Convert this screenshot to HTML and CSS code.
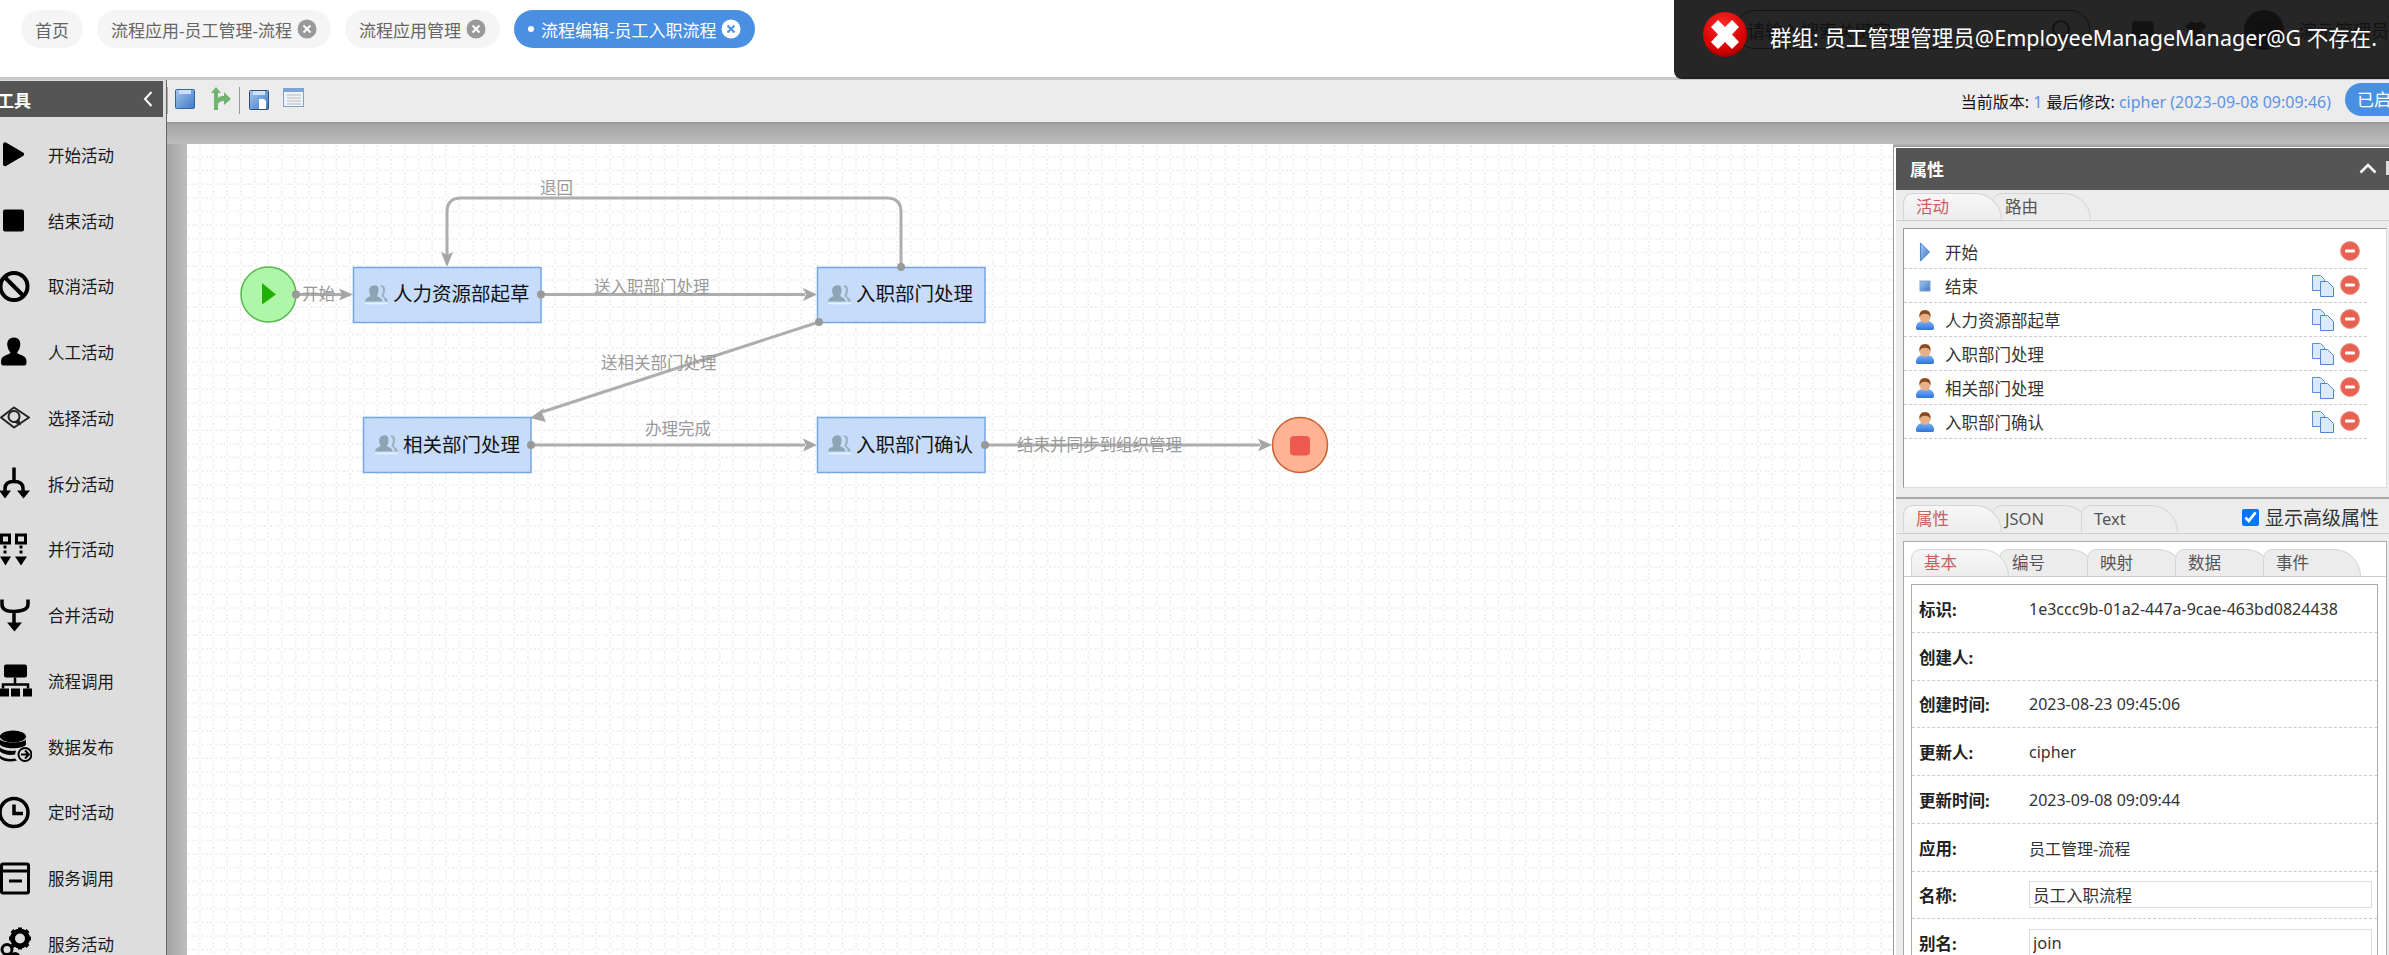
FILE: index.html
```html
<!DOCTYPE html>
<html lang="zh-CN">
<head>
<meta charset="utf-8">
<title>流程编辑-员工入职流程</title>
<link rel="stylesheet" href="styles.css">
</head>
<body>
<svg class="defs" width="0" height="0" aria-hidden="true">
  <defs>
    <linearGradient id="gBlue" x1="0" y1="0" x2="1" y2="1"><stop offset="0" stop-color="#a5c8f0"/><stop offset="1" stop-color="#3f78c4"/></linearGradient>
    <linearGradient id="gBody" x1="0" y1="0" x2="0" y2="1"><stop offset="0" stop-color="#7cb2f5"/><stop offset="1" stop-color="#2f74dc"/></linearGradient>
    <radialGradient id="gErr" cx=".45" cy=".3" r=".75"><stop offset="0" stop-color="#ff2a2a"/><stop offset=".75" stop-color="#d40000"/><stop offset="1" stop-color="#8c0000"/></radialGradient>
    <pattern id="grid" patternUnits="userSpaceOnUse" x="187" y="144" width="13.67" height="13.67">
      <rect x="12" y="1" width="2" height="2" fill="#ececec"/><rect x="12" y="5.560" width="2" height="2" fill="#ececec"/><rect x="12" y="9.120" width="2" height="2" fill="#ececec"/>
      <rect x="1" y="12" width="2" height="2" fill="#ececec"/><rect x="5.560" y="12" width="2" height="2" fill="#ececec"/><rect x="9.120" y="12" width="2" height="2" fill="#ececec"/>
    </pattern>
    <symbol id="i-user" viewBox="0 0 22 22">
      <path d="M1 20c0-5 3-7 6-8h8c3 1 6 3 6 8 0 1-1 2-3 2H4c-2 0-3-1-3-2z" fill="url(#gBody)"/>
      <circle cx="11" cy="8" r="6" fill="#e6b088"/>
      <path d="M5 8c-1-5 2-8 6-8s7 3 6 8c-1-3-3-4-6-4s-5 1-6 4z" fill="#8a4a1e"/>
    </symbol>
    <symbol id="i-copy" viewBox="0 0 22 22">
      <path d="M.5.500h8l4 4v11H.5z" fill="#d9e8fb" stroke="#5d8fd6"/>
      <path d="M8.500 6.500h7l6 6v9h-13z" fill="#dceafc" stroke="#4f85d2"/>
    </symbol>
    <symbol id="i-del" viewBox="0 0 20 20">
      <circle cx="10" cy="10" r="9.500" fill="#e8604f" stroke="#e79a90"/>
      <rect x="5" y="8.500" width="10" height="3" rx="1" fill="#fff"/>
    </symbol>
    <symbol id="i-group" viewBox="0 1 21 19">
      <path d="M9 2c3 0 4 3 3 7l-1 3c3 1 5 3 5 5H0c0-2 2-4 5-5L4 9C3 5 5 2 9 2z" fill="#8ba5b5"/>
      <path d="M15 2c3 0 4 3 3 7l-1 3c2 1 4 3 4 5h-3c0-2-1-4-3-5l1-3c1-3 0-5-2-6 0-1 1-1 1-1z" fill="#9bb2c0"/>
      <rect x="0" y="18" width="21" height="1.400" fill="#e8f1fc"/>
    </symbol>
    <symbol id="i-close" viewBox="0 0 20 20">
      <circle cx="10" cy="10" r="9.500" fill="currentColor"/>
      <path d="M6.500 6.500l7 7M13.500 6.500l-7 7" class="closex"/>
    </symbol>
  </defs>
</svg>

<header class="topbar">
  <nav class="tabs">
    <a class="tab"><span>首页</span></a>
    <a class="tab"><span>流程应用-员工管理-流程</span><svg class="tab-x"><use href="#i-close"/></svg></a>
    <a class="tab"><span>流程应用管理</span><svg class="tab-x"><use href="#i-close"/></svg></a>
    <a class="tab tab-on"><i class="bullet"></i><span>流程编辑-员工入职流程</span><svg class="tab-x"><use href="#i-close"/></svg></a>
  </nav>
  <div class="top-right">
    <div class="search"><span>请输入搜索关键字</span>
      <svg class="search-ico" viewBox="0 0 22 22"><circle cx="10" cy="10" r="8" fill="none" stroke="#333" stroke-width="2"/><path d="M16 16l4 4" stroke="#333" stroke-width="2"/></svg>
    </div>
    <svg class="top-ico" viewBox="0 0 24 24"><rect x="1" y="3" width="22" height="18" rx="3" fill="#333"/></svg>
    <svg class="top-ico" viewBox="0 0 24 24"><path d="M7 3l5 2 5-2 6 5-3 4-2-1v10H6V11l-2 1-3-4z" fill="#333"/></svg>
    <svg class="avatar" viewBox="0 0 40 40"><circle cx="20" cy="20" r="20" fill="#333"/><circle cx="20" cy="18" r="8" fill="#222"/></svg>
    <span class="user">演示管理员</span>
  </div>
</header>

<div class="toast">
  <svg class="toast-ico" viewBox="0 0 44 45"><ellipse cx="22" cy="22.500" rx="22" ry="22.500" fill="url(#gErr)"/><path d="M8 15l7-7 7 7 7-7 7 7-7 7.500 7 7.500-7 7-7-7-7 7-7-7 7-7.500z" fill="#fff"/></svg>
  <span class="toast-text">群组: 员工管理管理员@EmployeeManageManager@G 不存在.</span>
</div>

<main class="main">
  <aside class="side">
    <div class="side-title"><span>工具</span><svg class="side-chev" viewBox="0 0 10 16"><path d="M8.500 1L2 8l6.500 7" fill="none" stroke="#fff" stroke-width="2"/></svg></div>
    <ul class="tools">
      <li class="tool"><svg class="tool-ico" viewBox="0 0 32 32"><path d="M3 6c0-2 2-2.500 3-2l17 10c1.500 1 1.500 2.500 0 3.500L6 27.500c-1 .5-3 0-3-2z"/></svg><span>开始活动</span></li>
      <li class="tool"><svg class="tool-ico" viewBox="0 0 32 32"><rect x="3" y="5" width="21" height="22" rx="2"/></svg><span>结束活动</span></li>
      <li class="tool"><svg class="tool-ico" viewBox="0 0 32 32"><circle cx="14" cy="16" r="13.500" fill="none" stroke="#000" stroke-width="4"/><path d="M4 6l20 20" stroke="#000" stroke-width="4"/></svg><span>取消活动</span></li>
      <li class="tool"><svg class="tool-ico" viewBox="0 0 32 32"><path d="M14 1c5 0 7 4 6 9-.5 3-2 5-3 6 1 2 4 2 7 4 2 1 2.500 3 2.500 6 0 2-1 3-2 3H3c-1 0-2-1-2-3 0-3 .5-5 2.500-6 3-2 6-2 7-4-1-1-2.500-3-3-6-1-5 1-9 6.500-9z"/></svg><span>人工活动</span></li>
      <li class="tool"><svg class="tool-ico" viewBox="0 0 32 32"><path d="M1 16L14 6l15 10-15 10z" fill="none" stroke="#222" stroke-width="2" stroke-linejoin="round"/><circle cx="14" cy="15" r="5.500" fill="none" stroke="#222" stroke-width="2"/><path d="M14 21l7 3-2-7z" fill="#222"/></svg><span>选择活动</span></li>
      <li class="tool"><svg class="tool-ico" viewBox="0 0 32 32"><path d="M14 0v13M5 25v-4c0-5 4-7 9-7s9 2 9 7v4" fill="none" stroke="#000" stroke-width="3.500"/><path d="M-1 23h12l-6 8zM17 23h13l-6.500 8z"/></svg><span>拆分活动</span></li>
      <li class="tool"><svg class="tool-ico" viewBox="0 0 32 32"><path d="M0 0h11v11H0zM3 3v5h5V3zM15 0h12v11H15zM18 3v5h6V3z" fill-rule="evenodd"/><path d="M5 12v3M5 17v3M21 12v3M21 17v3" stroke="#000" stroke-width="3"/><path d="M0 23h11l-5.500 9zM15 23h12l-6 9z"/></svg><span>并行活动</span></li>
      <li class="tool"><svg class="tool-ico" viewBox="0 0 32 32"><path d="M2 0v5c0 5 5 7 12 7s14-2 14-7V0M14 12v12" fill="none" stroke="#000" stroke-width="3.500"/><path d="M7 23h15l-7.500 9z"/></svg><span>合并活动</span></li>
      <li class="tool"><svg class="tool-ico" viewBox="0 0 32 32"><rect x="4" y="0" width="23" height="13" rx="2"/><path d="M15 13v7M3 24v-4h25v4" fill="none" stroke="#000" stroke-width="2.500"/><path d="M0 24h9v8H0zM11 24h9v8h-9zM23 24h9v8h-9z"/></svg><span>流程调用</span></li>
      <li class="tool"><svg class="tool-ico" viewBox="0 0 32 32"><ellipse cx="13" cy="6" rx="13" ry="6"/><path d="M0 9c3 4 23 4 26 0v5c-3 5-23 5-26 0zM0 17c3 3 12 4 16 3l-1 4c-5 1-12 0-15-3zM0 25c3 3 10 4 15 3l2 2c-6 2-14 1-17-2z"/><circle cx="25" cy="24" r="6.500" fill="#ddd" stroke="#000" stroke-width="2"/><path d="M21 24h8M25 20l4 4-4 4" fill="none" stroke="#000" stroke-width="2"/></svg><span>数据发布</span></li>
      <li class="tool"><svg class="tool-ico" viewBox="0 0 32 32"><circle cx="14" cy="16" r="14" fill="none" stroke="#000" stroke-width="3.500"/><path d="M14 8v9h9" fill="none" stroke="#000" stroke-width="3.500"/></svg><span>定时活动</span></li>
      <li class="tool"><svg class="tool-ico" viewBox="0 0 32 32"><path d="M3 0h24c2 0 3 1 3 3v26c0 2-1 3-3 3H3c-2 0-3-1-3-3V3c0-2 1-3 3-3zM3 10v18c0 1 0 1 1 1h22c1 0 1 0 1-1V10zM3 3v4h24V3z" fill-rule="evenodd"/><rect x="9" y="17" width="13" height="3"/></svg><span>服务调用</span></li>
      <li class="tool"><svg class="tool-ico" viewBox="0 0 32 32"><circle cx="20" cy="11" r="7.500" fill="none" stroke="#000" stroke-width="5"/><path d="M20 0v4M20 18v4M9 11h4M27 11h4M12 3l3 3M28 3l-3 3M12 19l3-3M28 19l-3-3" stroke="#000" stroke-width="4"/><circle cx="7" cy="22" r="5" fill="none" stroke="#000" stroke-width="3"/><circle cx="15" cy="30" r="4" fill="none" stroke="#000" stroke-width="3"/></svg><span>服务活动</span></li>
    </ul>
  </aside>

  <section class="work">
    <div class="toolbar">
      <i class="sep"></i>
      <svg class="tb-save" viewBox="0 0 20 20"><rect x=".5" y=".5" width="19" height="19" rx="1" fill="url(#gBlue)" stroke="#35649e"/><rect x="4" y="1" width="12" height="4" fill="#cfe0f5"/></svg>
      <svg class="tb-branch" viewBox="0 0 20 23"><path d="M5 0l5 6H7v5c2-2 4-2 6-2V5l7 7-7 6v-4c-3 0-6 1-6 4v5H3V6H0z" fill="#6fb56f"/></svg>
      <i class="sep sep-tall"></i>
      <svg class="tb-save2" viewBox="0 0 20 20"><rect x=".5" y=".5" width="19" height="19" rx="1" fill="url(#gBlue)" stroke="#2f4f78"/><rect x="4" y="1" width="12" height="4" fill="#cfe0f5"/><path d="M10 9h5l2 2v8h-7z" fill="#fff"/></svg>
      <svg class="tb-list" viewBox="0 0 21 19"><rect x=".5" y=".5" width="20" height="18" fill="#eef3fa" stroke="#7fa3d3"/><rect x="1" y="1" width="19" height="3" fill="#7fa3d3"/><path d="M4 7h14M4 10h14M4 13h14M4 16h14" stroke="#bbb"/></svg>
      <div class="version">当前版本: <b>1</b> 最后修改: <b>cipher (2023-09-08 09:09:46)</b></div>
      <div class="state-btn">已启用</div>
    </div>

    <div class="stage">
      <svg class="canvas" viewBox="187 144 1706 811">
        <rect x="187" y="144" width="1706" height="811" fill="#fff"/>
        <rect x="187" y="144" width="1706" height="811" fill="url(#grid)"/>

        <g class="edge">
          <path d="M296 294.500H342"/>
          <path d="M541 294.500H805"/>
          <path d="M901 267V212q0-14-14-14H461q-14 0-14 14V255"/>
          <path d="M819 322L542 412"/>
          <path d="M531 445H805"/>
          <path d="M985 445H1260"/>
        </g>
        <g class="arrow">
          <path d="M353 294.500L339 288.500 342 294.500 339 300.500z"/>
          <path d="M817 294.500L803 288 806 294.500 803 301z"/>
          <path d="M447 267L441 252 447 255 453 252z"/>
          <path d="M530 418L544 408 542 413 546 422z"/>
          <path d="M817 445L803 438.500 806 445 803 451.500z"/>
          <path d="M1272 445L1258 438.500 1261 445 1258 451.500z"/>
        </g>

        <circle class="start" cx="268.500" cy="294.500" r="27.500"/>
        <path class="start-tri" d="M262 283L276 294.500 262 304.500z"/>

        <g class="node">
          <rect x="353.500" y="267.500" width="187.500" height="55"/>
          <rect x="363.500" y="417.500" width="167.500" height="55"/>
          <rect x="817.500" y="267.500" width="167.500" height="55"/>
          <rect x="817.500" y="417.500" width="167.500" height="55"/>
        </g>
        <use href="#i-group" x="365" y="283" width="23" height="23"/>
        <use href="#i-group" x="375" y="433" width="23" height="23"/>
        <use href="#i-group" x="828" y="283" width="23" height="23"/>
        <use href="#i-group" x="828" y="433" width="23" height="23"/>
        <g class="node-text">
          <text x="393" y="301">人力资源部起草</text>
          <text x="403" y="452">相关部门处理</text>
          <text x="856" y="301">入职部门处理</text>
          <text x="856" y="452">入职部门确认</text>
        </g>

        <g class="dot">
          <circle cx="296" cy="294.500" r="4"/>
          <circle cx="541" cy="294.500" r="4"/>
          <circle cx="901" cy="267" r="4"/>
          <circle cx="819" cy="322" r="4"/>
          <circle cx="531" cy="445" r="4"/>
          <circle cx="985" cy="445" r="4"/>
        </g>

        <circle class="end" cx="1300" cy="445" r="27.500"/>
        <rect class="end-sq" x="1290" y="436" width="20" height="19.500" rx="4"/>

        <g class="edge-text">
          <text x="540" y="194">退回</text>
          <text x="302" y="300">开始</text>
          <text x="594" y="293">送入职部门处理</text>
          <text x="601" y="369">送相关部门处理</text>
          <text x="645" y="435">办理完成</text>
          <text x="1017" y="451">结束并同步到组织管理</text>
        </g>
      </svg>

      <aside class="panel">
        <div class="panel-title"><span>属性</span>
          <svg class="panel-up" viewBox="0 0 18 11"><path d="M1.500 9.500L9 2l7.500 7.500" fill="none" stroke="#fff" stroke-width="2.500"/></svg>
          <i class="panel-sq"></i>
        </div>
        <div class="tabbar tabbar-top">
          <span class="ptab ptab-on">活动</span><span class="ptab">路由</span>
        </div>
        <div class="acts-wrap">
          <ul class="acts">
            <li class="act"><svg class="act-ico" viewBox="0 0 22 22"><path d="M6 1l10 10L6 21z" fill="url(#gBlue)" stroke="#3f78c4"/></svg><span class="act-name">开始</span><svg class="act-del"><use href="#i-del"/></svg></li>
            <li class="act"><svg class="act-ico" viewBox="0 0 22 22"><rect x="5.500" y="5.500" width="11" height="11" fill="url(#gBlue)" stroke="#7a9cc8"/></svg><span class="act-name">结束</span><svg class="act-copy"><use href="#i-copy"/></svg><svg class="act-del"><use href="#i-del"/></svg></li>
            <li class="act"><svg class="act-ico"><use href="#i-user"/></svg><span class="act-name">人力资源部起草</span><svg class="act-copy"><use href="#i-copy"/></svg><svg class="act-del"><use href="#i-del"/></svg></li>
            <li class="act"><svg class="act-ico"><use href="#i-user"/></svg><span class="act-name">入职部门处理</span><svg class="act-copy"><use href="#i-copy"/></svg><svg class="act-del"><use href="#i-del"/></svg></li>
            <li class="act"><svg class="act-ico"><use href="#i-user"/></svg><span class="act-name">相关部门处理</span><svg class="act-copy"><use href="#i-copy"/></svg><svg class="act-del"><use href="#i-del"/></svg></li>
            <li class="act"><svg class="act-ico"><use href="#i-user"/></svg><span class="act-name">入职部门确认</span><svg class="act-copy"><use href="#i-copy"/></svg><svg class="act-del"><use href="#i-del"/></svg></li>
          </ul>
        </div>
        <div class="tabbar tabbar-mid">
          <span class="ptab ptab-on">属性</span><span class="ptab">JSON</span><span class="ptab ptab-text">Text</span>
          <label class="adv"><input type="checkbox" class="adv-box" checked><span>显示高级属性</span></label>
        </div>
        <div class="props">
          <div class="tabbar tabbar-sub">
            <span class="ptab ptab-on">基本</span><span class="ptab stab">编号</span><span class="ptab stab">映射</span><span class="ptab stab">数据</span><span class="ptab stab">事件</span>
          </div>
          <div class="ptable">
            <div class="prow"><b>标识:</b><span>1e3ccc9b-01a2-447a-9cae-463bd0824438</span></div>
            <div class="prow"><b>创建人:</b><span></span></div>
            <div class="prow"><b>创建时间:</b><span>2023-08-23 09:45:06</span></div>
            <div class="prow"><b>更新人:</b><span>cipher</span></div>
            <div class="prow"><b>更新时间:</b><span>2023-09-08 09:09:44</span></div>
            <div class="prow"><b>应用:</b><span>员工管理-流程</span></div>
            <div class="prow"><b>名称:</b><input class="pinput" value="员工入职流程"></div>
            <div class="prow"><b>别名:</b><input class="pinput" value="join"></div>
          </div>
        </div>
      </aside>
    </div>
  </section>
</main>
</body>
</html>
```

FILE: styles.css
```css
* { box-sizing: border-box; }
html, body { margin: 0; padding: 0; height: 955px; overflow: hidden; }
body { font-family: "Noto Sans", "Noto Sans CJK SC", sans-serif; font-size: 16.5px; color: #222; background: #fff; position: relative; }
.defs { position: absolute; }
ul { list-style: none; margin: 0; padding: 0; }

.topbar { height: 80px; border-bottom: 3px solid #c9c9c9; display: flex; padding: 10px 0 0 21px; overflow: hidden; }
.tabs { display: flex; gap: 14px; height: 38px; }
.tab { display: flex; align-items: center; height: 38px; border-radius: 19px; background: #f5f5f5; color: #666; padding: 0 14px; font-size: 17px; }
.tab-x { width: 20px; height: 20px; margin-left: 5px; color: #999; --x: #fff; }
.tab-on { background: #4a90e2; color: #fff; padding-right: 14px; }
.tab-on .tab-x { color: #fff; --x: #4a90e2; }
.closex { stroke: var(--x); stroke-width: 2; }
.bullet { width: 6px; height: 6px; border-radius: 50%; background: #fff; margin-right: 7px; }

.top-right { margin-left: auto; display: flex; align-items: center; height: 39px; color: #333; width: 654px; flex: none; }
.search { width: 362px; height: 39px; border: 1px solid #333; border-radius: 20px; display: flex; align-items: center; justify-content: space-between; padding: 0 16px 0 11px; font-size: 18px; }
.search-ico { width: 22px; height: 22px; }
.top-ico { width: 24px; height: 24px; margin-left: 41px; }
.top-ico + .top-ico { margin-left: 29px; }
.avatar { width: 40px; height: 40px; margin-left: 37px; flex: none; }
.user { margin-left: 15px; white-space: nowrap; font-size: 18px; }

.toast { position: absolute; left: 1674px; top: 0; width: 715px; height: 79px; background: rgba(14, 14, 14, .9); border-bottom-left-radius: 8px; display: flex; padding: 12px 0 0 29px; z-index: 5; }
.toast-ico { width: 44px; height: 45px; flex: none; }
.toast-text { color: #fff; font-size: 21.500px; margin: 12px 0 0 23px; line-height: 28px; white-space: nowrap; }

.main { display: flex; height: 875px; }
.side { width: 167px; flex: none; background: #ddd; border-right: 1px solid #666; overflow: hidden; padding-top: 1px; }
.side-title { height: 36px; margin-right: 3px; background: #555; color: #fff; font-weight: 700; font-size: 17px; display: flex; align-items: center; justify-content: space-between; padding-right: 9px; text-indent: -3px; }
.side-chev { width: 12px; height: 16px; }
.tools { padding-top: 5px; }
.tool { height: 65.750px; display: flex; align-items: center; font-size: 16.500px; color: #1a1a1a; }
.tool-ico { width: 32px; height: 33px; flex: none; margin-right: 16px; }

.work { flex: 1; min-width: 0; display: flex; flex-direction: column; }
.toolbar { height: 44px; flex: none; background: #ececec; border-bottom: 2px solid #999; display: flex; align-items: flex-start; }
.sep { width: 1px; height: 27px; margin-top: 7px; background: #aaa; flex: none; }
.sep-tall { margin: 7px 9px 0 8px; background: #999; }
.tb-save { width: 20px; height: 20px; margin: 9px 0 0 7px; }
.tb-branch { width: 20px; height: 23px; margin: 7px 0 0 16px; }
.tb-save2 { width: 20px; height: 20px; margin-top: 10px; }
.tb-list { width: 21px; height: 19px; margin: 8px 0 0 14px; }
.version { margin-left: auto; margin-top: 10px; font-size: 16px; line-height: 24px; color: #111; white-space: nowrap; }
.version b { font-weight: 400; color: #5b93e3; }
.state-btn { width: 60px; height: 33px; margin: 3px -16px 0 14px; background: #4a90e2; color: #fff; border-radius: 17px 0 0 17px; padding-left: 12px; font-size: 17px; line-height: 33px; white-space: nowrap; overflow: hidden; flex: none; }

.stage { flex: 1; min-height: 0; display: flex; padding: 20px 0 0 20px; overflow: hidden; background: linear-gradient(#a4a4a4, #bdbdbd) top / 100% 20px no-repeat, linear-gradient(to right, #a4a4a4, #bdbdbd) left / 20px 100% no-repeat, #b0b0b0; }
.canvas { width: 1706px; height: 811px; flex: none; display: block; }
.edge path { fill: none; stroke: #aeaeae; stroke-width: 3; }
.arrow path { fill: #a5a5a5; }
.dot circle { fill: #999; }
.start { fill: #aef7a8; stroke: #5ab552; stroke-width: 1.500; }
.start-tri { fill: #22b000; }
.end { fill: #ffb294; stroke: #c8622f; stroke-width: 1.500; }
.end-sq { fill: #ee5a4f; }
.node rect { fill: #c6dcfa; stroke: #74a6e4; stroke-width: 1.500; }
.node-text text { font-size: 19.500px; fill: #111; }
.edge-text text { font-size: 16.500px; fill: #999; }

.panel { width: 496px; flex: none; margin-top: 2px; border-top: 1px solid #999; border-left: 1px solid #999; padding: 1px 0 0 2px; overflow: hidden; background: linear-gradient(#fff, #fff) top / 100% 1px no-repeat, linear-gradient(#fff, #fff) left / 2px 100% no-repeat, #ececec; }
.panel-title { height: 42px; background: #555; color: #fff; font-weight: 700; font-size: 17px; display: flex; align-items: center; padding: 0 0 2px 14px; }
.panel-up { width: 18px; height: 11px; margin-left: auto; margin-right: 9px; }
.panel-sq { width: 14px; height: 14px; border: 3px solid #ddd; margin-right: -11px; flex: none; }
.tabbar { display: flex; background: #ececec; border-bottom: 1px solid #ccc; padding-left: 7px; }
.tabbar-top { height: 31px; padding-top: 3px; }
.ptab { position: relative; width: 99px; height: 27px; margin-right: -10px; padding: 1px 0 0 12px; border: 1px solid #d5d5d5; border-bottom: 0; border-radius: 10px 28px 0 0; background: #ececec; font-size: 16.500px; line-height: 24px; color: #555; }
.ptab-on { z-index: 2; color: #c9605f; background: linear-gradient(#f7f7f7, #ececec); }
.acts-wrap { padding: 7px 2px 9px 7px; border-bottom: 2px solid #aaa; }
.acts { height: 260px; background: #fff; border: 1px solid #ddd; border-top-color: #999; border-left-color: #999; padding-top: 6px; }
.act { height: 34px; display: flex; align-items: center; position: relative; padding-right: 26px; }
.act::after { content: ""; position: absolute; left: 0; right: 19px; bottom: 0; border-bottom: 1px dashed #ccc; }
.act-ico { width: 20px; height: 20px; margin-left: 11px; flex: none; }
.act-name { margin-left: 10px; font-size: 16.500px; color: #333; }
.act-copy { width: 22px; height: 22px; margin-left: auto; flex: none; }
.act-del { width: 20px; height: 20px; margin: -2px 0 0 6px; flex: none; }
.act-name + .act-del { margin-left: auto; }
.tabbar-mid { height: 35px; padding-top: 6px; position: relative; }
.ptab-text { width: 97px; }
.adv { position: absolute; left: 346px; top: 6px; display: flex; align-items: center; height: 24px; font-size: 19px; color: #333; }
.adv-box { width: 17px; height: 17px; margin: 0 6px 0 0; accent-color: #0075ff; }
.props { background: #fff; margin: 7px 2px 0 7px; border: 1px solid #aaa; border-bottom: 0; height: 500px; }
.tabbar-sub { background: #fff; padding: 7px 0 0 7px; height: 35px; }
.tabbar-sub .ptab { width: 98px; height: 27px; }
.tabbar-sub .stab { background: #ececec; }
.ptable { margin: 7px 8px 0 7px; border: 1px solid #aaa; border-bottom: 0; height: 400px; }
.prow { height: 47.750px; display: flex; align-items: center; border-bottom: 1px dashed #ccc; padding: 1px 5px 0 7px; font-size: 16px; color: #333; }
.prow b { width: 110px; flex: none; color: #222; font-weight: 700; font-size: 16.500px; }
.pinput { flex: 1; min-width: 0; height: 27px; margin-top: -1px; border: 1px solid #ddd; padding: 0 3px; font: inherit; font-size: 16.500px; color: #333; background: #fff; outline: 0; }
```
